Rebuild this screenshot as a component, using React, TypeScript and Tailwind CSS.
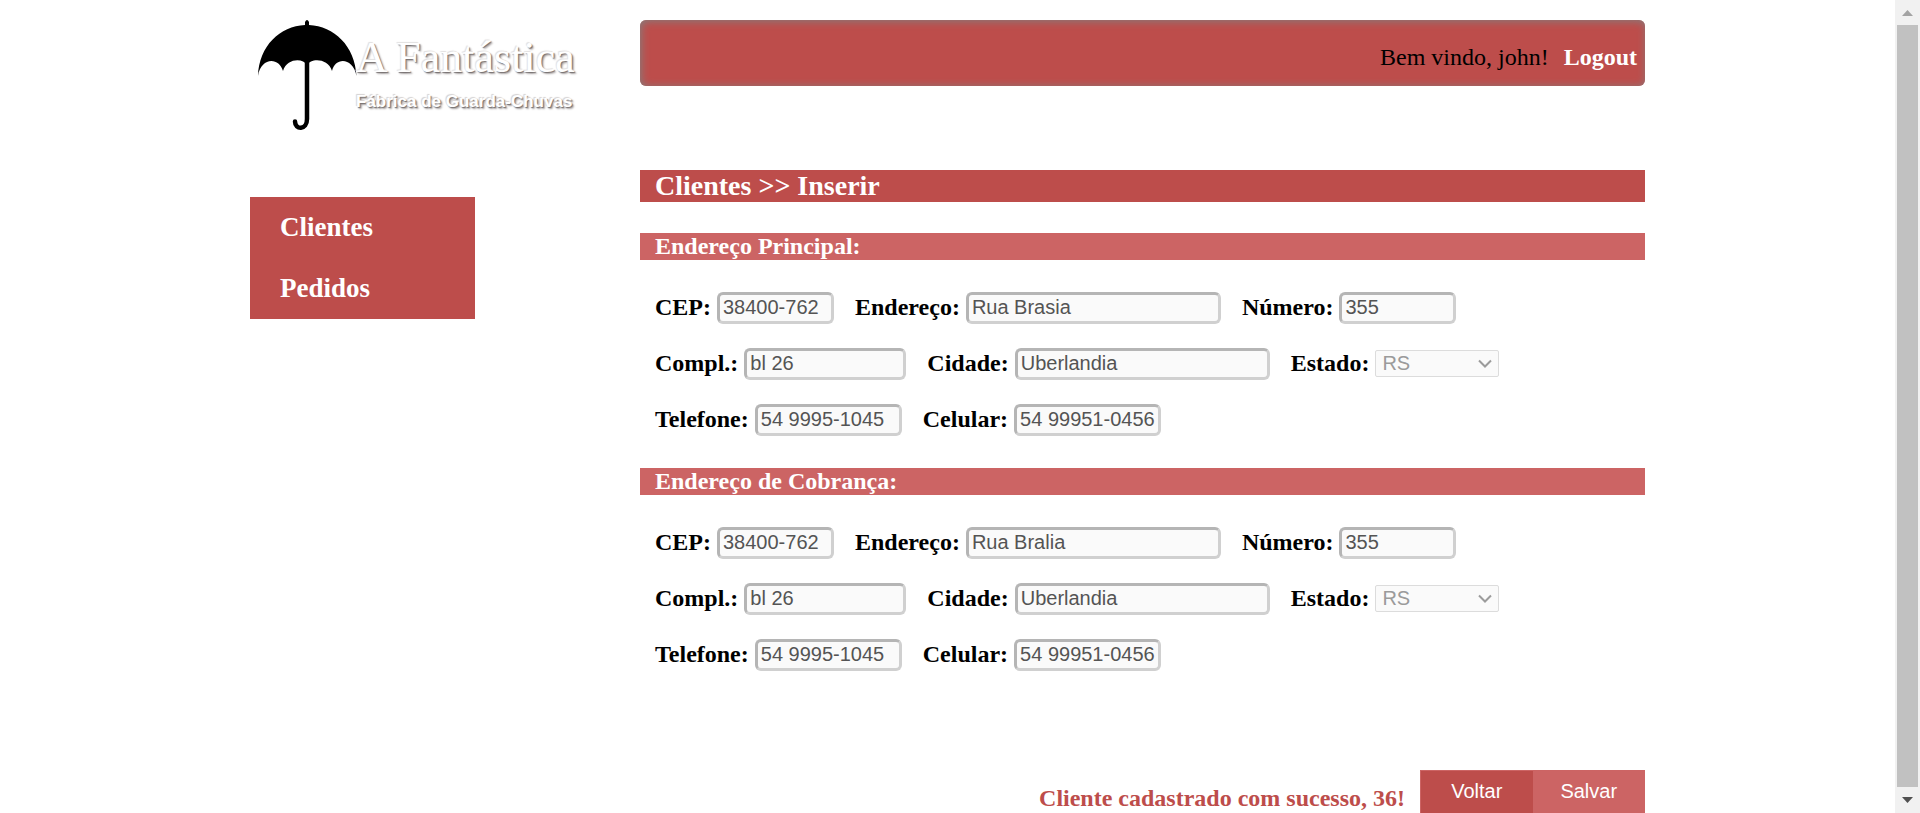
import { useId } from "react";

type Address = {
  cep: string;
  endereco: string;
  numero: string;
  complemento: string;
  cidade: string;
  estado: string;
  telefone: string;
  celular: string;
};

const principal: Address = {
  cep: "38400-762",
  endereco: "Rua Brasia",
  numero: "355",
  complemento: "bl 26",
  cidade: "Uberlandia",
  estado: "RS",
  telefone: "54 9995-1045",
  celular: "54 99951-0456",
};

const cobranca: Address = { ...principal, endereco: "Rua Bralia" };

function Logo() {
  return (
    <a href="#inicio" className="flex h-[150px] w-[330px] items-start pl-1 pt-[18px]">
      <svg
        width="106"
        height="118"
        viewBox="0 0 106 118"
        className="shrink-0"
        role="img"
        aria-label="Guarda-chuva"
      >
        <path
          d="M4 58 C5 28 26 8 51 7 L51 4 Q53 0 55 4 L55 7 C80 8 101 28 102.500 58 C99 39 81 39 78 53 C74 40 57 40 53 47 C49 40 33 40 29 53 C25 39 7 39 4 58 Z"
          fill="#000"
        />
        <path
          d="M53 44 V101 C53 112.500 41 112 41 103.500"
          fill="none"
          stroke="#000"
          strokeWidth="4.500"
          strokeLinecap="round"
        />
      </svg>
      <span className="-ml-1 flex flex-col whitespace-nowrap pt-3 text-white">
        <span className="font-['Liberation_Serif',serif] text-[44px] leading-[56px] [text-shadow:-1px_-1px_1px_#e2e0e0,1px_1px_1px_#767070,2px_2px_2px_#b0abab]">
          A Fantástica
        </span>
        <span className="pt-[6px] font-['Liberation_Sans',sans-serif] text-[17px] font-bold leading-5 [text-shadow:-1px_-1px_1px_#d5d2d2,1px_1px_1px_#767070,2px_2px_2px_#a8a3a3]">
          Fábrica de Guarda-Chuvas
        </span>
      </span>
    </a>
  );
}

function Field({ label, value, width }: { label: string; value: string; width: string }) {
  const id = useId();
  return (
    <div className="flex items-center gap-[6px]">
      <label htmlFor={id} className="pb-[2px] font-bold">
        {label}
      </label>
      <input
        id={id}
        type="text"
        defaultValue={value}
        disabled
        className={`${width} h-8 rounded-[6px] border-[3px] border-b-[#d0d0d0] border-l-[#b5b5b5] border-r-[#d0d0d0] border-t-[#b5b5b5] bg-[#fafafa] pb-[2px] pl-[3px] font-['Liberation_Sans',sans-serif] text-[20px] leading-6 text-[#545454]`}
      />
    </div>
  );
}

function StateField({ value }: { value: string }) {
  const id = useId();
  return (
    <div className="flex items-center gap-[6px]">
      <label htmlFor={id} className="pb-[2px] font-bold">
        Estado:
      </label>
      <div className="relative pb-[2px]">
        <select
          id={id}
          defaultValue={value}
          disabled
          className="block h-[27px] w-[124px] appearance-none rounded-[2px] border border-[#dcdcdc] bg-[#fafafa] pl-[6px] font-['Liberation_Sans',sans-serif] text-[20px] leading-6 text-[#9b9b9b] opacity-100"
        >
          <option>RS</option>
          <option>SC</option>
          <option>PR</option>
          <option>MG</option>
        </select>
        <svg
          width="14"
          height="9"
          viewBox="0 0 14 9"
          className="pointer-events-none absolute right-[7px] top-[9px]"
          aria-hidden="true"
        >
          <path d="M1 1.500 L7 7.500 L13 1.500" fill="none" stroke="#9b9b9b" strokeWidth="2" />
        </svg>
      </div>
    </div>
  );
}

function AddressSection({ title, data }: { title: string; data: Address }) {
  return (
    <section>
      <h2 className="bg-[#cc6464] pl-[15px] font-bold leading-[27px] text-white">{title}</h2>
      <div className="flex flex-col gap-6 pb-8 pl-[15px] pt-8">
        <div className="flex gap-[21px]">
          <Field label="CEP:" value={data.cep} width="w-[117px]" />
          <Field label="Endereço:" value={data.endereco} width="w-[255px]" />
          <Field label="Número:" value={data.numero} width="w-[117px]" />
        </div>
        <div className="flex gap-[21px]">
          <Field label="Compl.:" value={data.complemento} width="w-[162px]" />
          <Field label="Cidade:" value={data.cidade} width="w-[255px]" />
          <StateField value={data.estado} />
        </div>
        <div className="flex gap-[21px]">
          <Field label="Telefone:" value={data.telefone} width="w-[147px]" />
          <Field label="Celular:" value={data.celular} width="w-[147px]" />
        </div>
      </div>
    </section>
  );
}

function ScrollRail() {
  return (
    <div className="flex w-[25px] shrink-0 flex-col items-center bg-[#f1f1f1]" aria-hidden="true">
      <svg width="25" height="25" viewBox="0 0 25 25" className="shrink-0">
        <path d="M7 16 L12.500 10 L18 16 Z" fill="#a3a3a3" />
      </svg>
      <div className="w-[21px] flex-1 bg-[#c1c1c1]" />
      <svg width="25" height="26" viewBox="0 0 25 26" className="shrink-0">
        <path d="M7 10 L12.500 16 L18 10 Z" fill="#505050" />
      </svg>
    </div>
  );
}

export default function App() {
  return (
    <div className="flex h-screen bg-white font-['Liberation_Serif',serif] text-[24px] leading-[27px] text-black">
      <div className="min-w-0 flex-1 overflow-hidden">
        <div className="mx-auto grid max-w-[1395px] grid-cols-[390px_1fr]">
          <aside>
            <Logo />
            <nav className="mt-[47px] flex w-[225px] flex-col bg-[#bd4d4b] text-[27px] font-bold text-white">
              <a href="#clientes" className="py-[15px] pl-[30px] leading-[31px]">
                Clientes
              </a>
              <a href="#pedidos" className="py-[15px] pl-[30px] leading-[31px]">
                Pedidos
              </a>
            </nav>
          </aside>
          <main className="pt-5">
            <header className="flex h-[66px] items-end justify-end gap-[15px] rounded-[6px] bg-[#bd4d4b] pb-[15px] pr-2 shadow-[inset_1px_1px_8px_#808080]">
              <span>Bem vindo, john!</span>
              <a href="#logout" className="font-bold text-white">
                Logout
              </a>
            </header>
            <h1 className="mb-[31px] mt-[84px] bg-[#bd4d4b] pl-[15px] text-[28px] font-bold leading-8 text-white">
              Clientes &gt;&gt; Inserir
            </h1>
            <form onSubmit={(e) => e.preventDefault()}>
              <AddressSection title="Endereço Principal:" data={principal} />
              <AddressSection title="Endereço de Cobrança:" data={cobranca} />
              <div className="mt-[67px] flex items-end justify-end">
                <p role="status" className="mr-[15px] pb-px font-bold text-[#bd4d4b]">
                  Cliente cadastrado com sucesso, 36!
                </p>
                <div className="grid w-[225px] grid-cols-2 font-['Liberation_Sans',sans-serif] text-[20px] text-white">
                  <button
                    type="button"
                    className="h-[43px] border-l border-t border-[#cc6464] bg-[#bd4d4b] pb-px"
                  >
                    Voltar
                  </button>
                  <button type="submit" className="h-[43px] bg-[#cc6464]">
                    Salvar
                  </button>
                </div>
              </div>
            </form>
          </main>
        </div>
      </div>
      <ScrollRail />
    </div>
  );
}
